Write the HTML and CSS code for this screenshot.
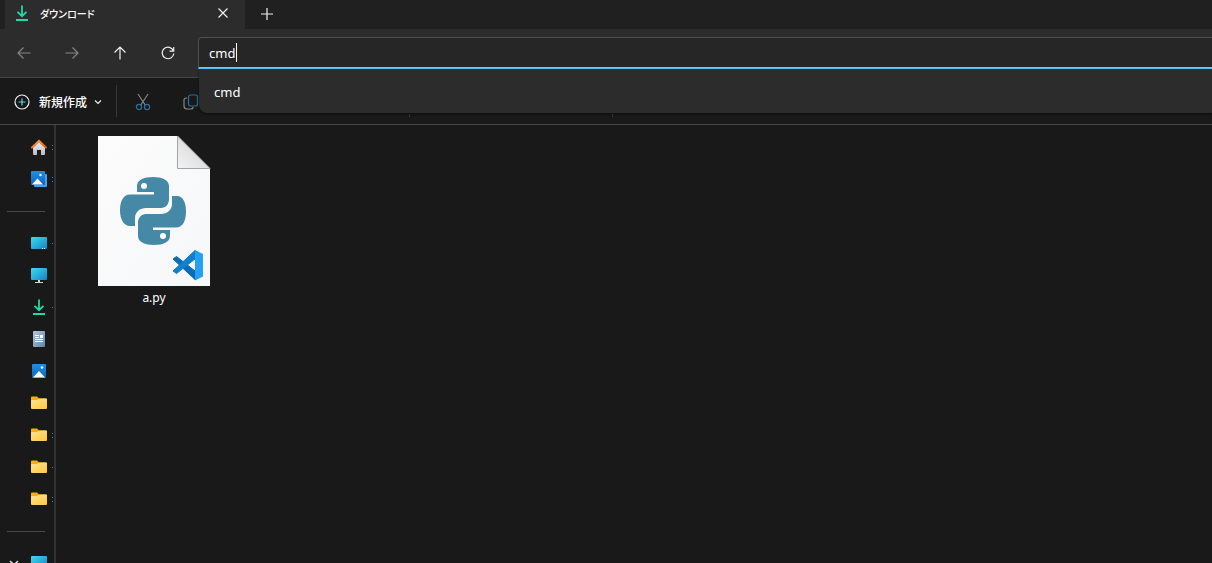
FILE: index.html
```html
<!DOCTYPE html>
<html lang="ja">
<head>
<meta charset="UTF-8" />
<meta name="viewport" content="width=device-width, initial-scale=1" />
<title>ダウンロード</title>
<link rel="stylesheet" href="styles.css">
</head>
<body>

<!-- Shared gradients and icons -->
<svg class="defs" width="0" height="0" aria-hidden="true">
  <defs>
    <linearGradient id="sky" x1="0" y1="0" x2="1" y2="1"><stop offset="0" stop-color="#3bdcf2"/><stop offset="1" stop-color="#1583c4"/></linearGradient>
    <linearGradient id="photo" x1="0" y1="0" x2="0" y2="1"><stop offset="0" stop-color="#1f8fe4"/><stop offset="1" stop-color="#0b66bd"/></linearGradient>
    <linearGradient id="gold" x1="0" y1="0" x2="1" y2="1"><stop offset="0" stop-color="#ffe596"/><stop offset="1" stop-color="#ffc63c"/></linearGradient>
    <linearGradient id="wall" x1="0" y1="0" x2="0" y2="1"><stop offset="0" stop-color="#f2f2f2"/><stop offset="1" stop-color="#b9bcc0"/></linearGradient>
    <linearGradient id="roof" x1="0" y1="0" x2="1" y2="1"><stop offset="0" stop-color="#ffa03c"/><stop offset="1" stop-color="#e0561c"/></linearGradient>
    <linearGradient id="docFill" x1="0" y1="0" x2="1" y2="1"><stop offset="0" stop-color="#b4c8dc"/><stop offset="1" stop-color="#6583a3"/></linearGradient>
    <linearGradient id="paper" x1="0" y1="0" x2="1" y2="1"><stop offset="0" stop-color="#fcfcfc"/><stop offset="1" stop-color="#f6f7f9"/></linearGradient>
    <linearGradient id="fold" x1="0" y1="1" x2="1" y2="0"><stop offset="0" stop-color="#f4f4f4"/><stop offset="1" stop-color="#cccccc"/></linearGradient>
  </defs>
  <symbol id="i-download" viewBox="0 0 16 16">
    <path d="M8 0.5v10.500M3.500 6.800L8 11.200l4.500-4.400" fill="none" stroke="#20d8a8" stroke-width="1.800"/>
    <path d="M2 14h12v2H2z" fill="#20d8a8"/>
  </symbol>
  <symbol id="i-folder" viewBox="0 0 16 16">
    <path d="M0 2.500a1 1 0 0 1 1-1h5l2 2h7a1 1 0 0 1 1 1v3H0z" fill="#f5b000"/>
    <path d="M0 6a1 1 0 0 1 1-1h5L8 3.500h7a1 1 0 0 1 1 1V13a1 1 0 0 1-1 1H1a1 1 0 0 1-1-1z" fill="url(#gold)"/>
  </symbol>
  <symbol id="i-desktop" viewBox="0 0 16 16">
    <rect y="2" width="16" height="12" rx="1" fill="url(#sky)"/>
    <path d="M11 13h1v1h-1zM13 13h1v1h-1z" fill="#fff"/>
  </symbol>
  <symbol id="i-pc" viewBox="0 0 16 16">
    <rect y="1" width="16" height="12" rx="1" fill="url(#sky)"/>
    <path d="M7 13h2v2h3v1H4v-1h3z" fill="#cfd6da"/>
  </symbol>
</svg>

<header class="tab-bar">
  <div class="tab">
    <svg class="tab-icon" width="16" height="16"><use href="#i-download"/></svg>
    <span class="tab-title">ダウンロード</span>
    <button type="button" class="icon-btn" aria-label="タブを閉じる">
      <svg width="10" height="10" viewBox="0 0 10 10"><path d="M.5 .5l9 9M9.500 .5l-9 9"/></svg>
    </button>
  </div>
  <button type="button" class="icon-btn new-tab" aria-label="新しいタブ">
    <svg width="12" height="12" viewBox="0 0 12 12"><path d="M6 0v12M0 6h12"/></svg>
  </button>
</header>

<nav class="nav-bar">
  <div class="nav-buttons">
    <button type="button" class="icon-btn" aria-label="戻る" disabled>
      <svg width="14" height="14" viewBox="0 0 14 14"><path d="M13.500 7H1M6.500 1.500L1 7l5.500 5.500"/></svg>
    </button>
    <button type="button" class="icon-btn" aria-label="進む" disabled>
      <svg width="14" height="14" viewBox="0 0 14 14"><path d="M.5 7H13M7.500 1.500L13 7l-5.500 5.500"/></svg>
    </button>
    <button type="button" class="icon-btn" aria-label="上へ">
      <svg width="14" height="14" viewBox="0 0 14 14"><path d="M7 13.500V1M1.500 6.500L7 1l5.500 5.500"/></svg>
    </button>
    <button type="button" class="icon-btn" aria-label="更新">
      <svg width="14" height="14" viewBox="0 0 14 14"><path d="M12.500 5A5.800 5.800 0 1 0 12.800 7.500M12.700 1v4.200H8.500"/></svg>
    </button>
  </div>
  <div class="address">
    <input type="text" class="address-input" aria-label="アドレス" value="cmd" />
    <span class="caret"></span>
    <div class="suggestions"><button type="button">cmd</button></div>
  </div>
</nav>

<div class="toolbar">
  <button type="button" class="new-btn">
    <svg width="16" height="16" viewBox="0 0 16 16" fill="none"><circle cx="8" cy="8" r="7" stroke="#f0f0f0" stroke-width="1.200"/><path d="M8 4.500v7M4.500 8h7" stroke="#5fd3e8" stroke-width="1.200"/></svg>
    <span>新規作成</span>
    <svg width="8" height="6" viewBox="0 0 8 6" fill="none"><path d="M1 1.500l3 3 3-3" stroke="#eee" stroke-width="1.200"/></svg>
  </button>
  <span class="divider"></span>
  <button type="button" class="icon-btn cut" aria-label="切り取り" disabled>
    <svg width="16" height="18" viewBox="0 0 16 18"><path d="M3 1l7.500 11.500M13 1L5.500 12.500"/><circle cx="4" cy="14" r="2.600" stroke="#2f6f98"/><circle cx="12" cy="14" r="2.600" stroke="#2f6f98"/></svg>
  </button>
  <button type="button" class="icon-btn" aria-label="コピー" disabled>
    <svg width="16" height="16" viewBox="0 0 16 16"><path d="M4 4H3a2 2 0 0 0-2 2v6a3 3 0 0 0 3 3h4a2 2 0 0 0 2-2"/><rect x="5.500" y="1" width="9" height="11" rx="2" stroke="#2f6f98"/></svg>
  </button>
  <span class="divider group-end"></span>
  <span class="divider group-end"></span>
</div>

<main class="content">
  <ul class="sidebar">
    <li class="two">
      <svg width="16" height="16" viewBox="0 0 16 16"><path d="M2 7l6-5.500L14 7v8a1 1 0 0 1-1 1h-3v-5H6v5H3a1 1 0 0 1-1-1z" fill="url(#wall)"/><path d="M1 8.500L8 2l7 6.500" fill="none" stroke="url(#roof)" stroke-width="2.200" stroke-linecap="round"/></svg>
    </li>
    <li class="two">
      <svg width="16" height="16" viewBox="0 0 16 16"><path d="M4 3h11a1 1 0 0 1 1 1v11a1 1 0 0 1-1 1H4a1 1 0 0 1-1-1z" fill="#4b9fe6"/><rect width="14" height="14" rx="1" fill="url(#photo)"/><path d="M1 13.500l5.500-6 5.500 6z" fill="#fff"/><circle cx="9.500" cy="4" r="1.200" fill="#fff"/></svg>
    </li>
    <li class="separator"></li>
    <li class="one"><svg width="16" height="16"><use href="#i-desktop"/></svg></li>
    <li><svg width="16" height="16"><use href="#i-pc"/></svg></li>
    <li class="one"><svg width="16" height="16"><use href="#i-download"/></svg></li>
    <li>
      <svg width="16" height="16" viewBox="0 0 16 16"><rect x="2" width="12" height="16" rx="1" fill="url(#docFill)"/><path d="M4 4.500h4M4 6.500h4M4 8.500h8M4 10.500h8" stroke="#fff"/><path d="M9 4h3v3H9z" fill="#fff"/></svg>
    </li>
    <li>
      <svg width="16" height="16" viewBox="0 0 16 16"><rect x="1" y="1" width="14" height="14" rx="1" fill="url(#photo)"/><path d="M2 14.500l6-6.500 6 6.500z" fill="#fff"/><circle cx="11" cy="4.500" r="1.300" fill="#fff"/></svg>
    </li>
    <li><svg width="16" height="16"><use href="#i-folder"/></svg></li>
    <li class="two"><svg width="16" height="16"><use href="#i-folder"/></svg></li>
    <li class="one"><svg width="16" height="16"><use href="#i-folder"/></svg></li>
    <li class="two"><svg width="16" height="16"><use href="#i-folder"/></svg></li>
    <li class="separator"></li>
    <li class="drive">
      <svg width="10" height="8" viewBox="0 0 10 8" fill="none"><path d="M1 2l4 4 4-4" stroke="#ddd" stroke-width="1.500"/></svg>
      <svg width="16" height="16"><use href="#i-pc"/></svg>
    </li>
  </ul>

  <section class="files">
    <figure class="file">
      <svg width="114" height="152" viewBox="0 0 114 152">
        <path d="M1 1h79.500L113 33.500V151H1z" fill="url(#paper)"/>
        <path d="M80.500 1v32.500H113z" fill="url(#fold)" stroke="#a4a4a4"/>
        <!-- Python -->
        <g fill="#4689a6">
          <path d="M56 42c-9 0-16 3-16 9v6h17v2.500H33c-7 0-10 7-10 16 0 9 4 15.500 10 15.500h5v-8c0-6 5-10 11-10h15c5 0 8-4 8-9V51c0-6-7-9-16-9z"/>
          <path d="M57 110c9 0 16-3 16-9v-6H56v-2.500h23c7 0 10-7 10-16 0-9-3-15.500-9-15.500h-5v8c0 6-5 10-11 10H49c-5 0-8 4-8 9v13c0 6 7 9 16 9z"/>
        </g>
        <circle cx="47" cy="51" r="3" fill="#fff"/>
        <circle cx="66" cy="101" r="3" fill="#fff"/>
        <!-- VS Code -->
        <path d="M76 124l3.500-2.500L98 136v8.500z" fill="#0a6cb8" stroke="#0a6cb8" stroke-linejoin="round"/>
        <path d="M76 136l3.500 2.500L98 124v-8.500z" fill="#1180cc" stroke="#1180cc" stroke-linejoin="round"/>
        <path d="M98 115l8 4v22.500l-8 4z" fill="#24a1f0"/>
      </svg>
      <figcaption>a.py</figcaption>
    </figure>
  </section>
</main>

</body>
</html>
```
FILE: styles.css
```css
body {
  font-family: "Noto Sans", "Noto Sans CJK JP", sans-serif;
  font-size: 12px;
  background: #191919;
  color: #fff;
  margin: 0;
  height: 100vh;
  overflow: hidden;
  display: flex;
  flex-direction: column;
}
button {
  background: none;
  border: none;
  padding: 0;
  color: inherit;
  font: inherit;
}
svg {
  display: block;
  flex: none;
}
.defs {
  position: absolute;
}
.icon-btn {
  width: 32px;
  height: 24px;
  display: flex;
  align-items: center;
  justify-content: center;
}
.icon-btn svg {
  fill: none;
  stroke: #f0f0f0;
  stroke-width: 1.2;
}
.icon-btn:disabled svg {
  stroke: #858585;
}

/* Tabs */
.tab-bar {
  display: flex;
  align-items: center;
  height: 29px;
  flex: none;
  padding-left: 5px;
  background: #202020;
}
.tab {
  display: flex;
  align-items: center;
  width: 240px;
  height: 29px;
  box-sizing: border-box;
  padding: 0 6px 3px 9px;
  background: #2c2c2c;
}
.tab-title {
  flex: 1;
  margin-left: 10px;
  font-size: 10px;
  font-weight: 500;
  font-feature-settings: "palt";
}
.new-tab {
  margin-left: 6px;
  padding-bottom: 2px;
}

/* Navigation */
.nav-bar {
  display: flex;
  height: 48px;
  flex: none;
  background: #2c2c2c;
  border-bottom: 1px solid #454545;
}
.nav-buttons {
  display: flex;
  align-items: center;
  gap: 16px;
  padding: 0 14px 0 8px;
}
.address {
  position: relative;
  flex: 1;
  margin-top: 8px;
}
.address-input {
  display: block;
  width: 100%;
  height: 32px;
  box-sizing: border-box;
  padding: 0 10px;
  border: 1px solid #505050;
  border-right: none;
  border-bottom: 2px solid #5ccbff;
  border-radius: 4px 0 0 0;
  background: #262626;
  color: #fff;
  font: inherit;
  font-size: 13px;
  outline: none;
}
.caret {
  position: absolute;
  top: 6px;
  left: 38px;
  width: 1px;
  height: 19px;
  background: #fff;
}
.suggestions {
  position: absolute;
  top: 32px;
  left: 1px;
  right: 0;
  z-index: 1;
  height: 44px;
  background: #2c2c2c;
  border-bottom-left-radius: 8px;
  box-shadow: 0 1px 2px #0c0c0c;
}
.suggestions button {
  width: 100%;
  height: 44px;
  padding: 2px 15px 0;
  font-size: 13px;
  text-align: left;
}

/* Toolbar */
.toolbar {
  display: flex;
  align-items: center;
  height: 46px;
  box-sizing: content-box;
  flex: none;
  padding-left: 14px;
  background: #191919;
  border-bottom: 1px solid #484848;
}
.toolbar button {
  padding-top: 2px;
}
.new-btn {
  display: flex;
  align-items: center;
  gap: 6px;
  width: 102px;
  font-weight: 500;
}
.new-btn span {
  width: 50px;
  margin-left: 2px;
}
.divider {
  width: 1px;
  height: 32px;
  background: #383838;
}
.cut {
  margin: 0 16px 0 10px;
}
.group-end {
  margin-left: 202px;
}

/* Body */
.content {
  display: flex;
  flex: 1;
  min-height: 0;
}
.sidebar {
  width: 54px;
  flex: none;
  margin: 0;
  padding: 6px 0 0;
  list-style: none;
  border-right: 2px solid #333;
}
.sidebar li {
  display: flex;
  align-items: center;
  height: 32px;
  padding-left: 31px;
}
/* Sliver of the collapsed label */
.one::after,
.two::after {
  content: "";
  width: 1px;
  height: 1px;
  margin-left: 5px;
  background: #1d7fd0;
}
.two::after {
  height: 5px;
  background: linear-gradient(#1d7fd0 20%, transparent 20% 80%, #1d7fd0 80%);
}
.sidebar .separator {
  padding: 0 9px 0 7px;
}
.separator::before {
  content: "";
  flex: 1;
  height: 1px;
  background: #484848;
}
.sidebar .drive {
  gap: 12px;
  padding-left: 9px;
}
.files {
  flex: 1;
  padding: 10px 41px;
}
.file {
  width: 114px;
  margin: 0;
}
.file figcaption {
  margin-top: 2px;
  line-height: 18px;
  text-align: center;
}
```
